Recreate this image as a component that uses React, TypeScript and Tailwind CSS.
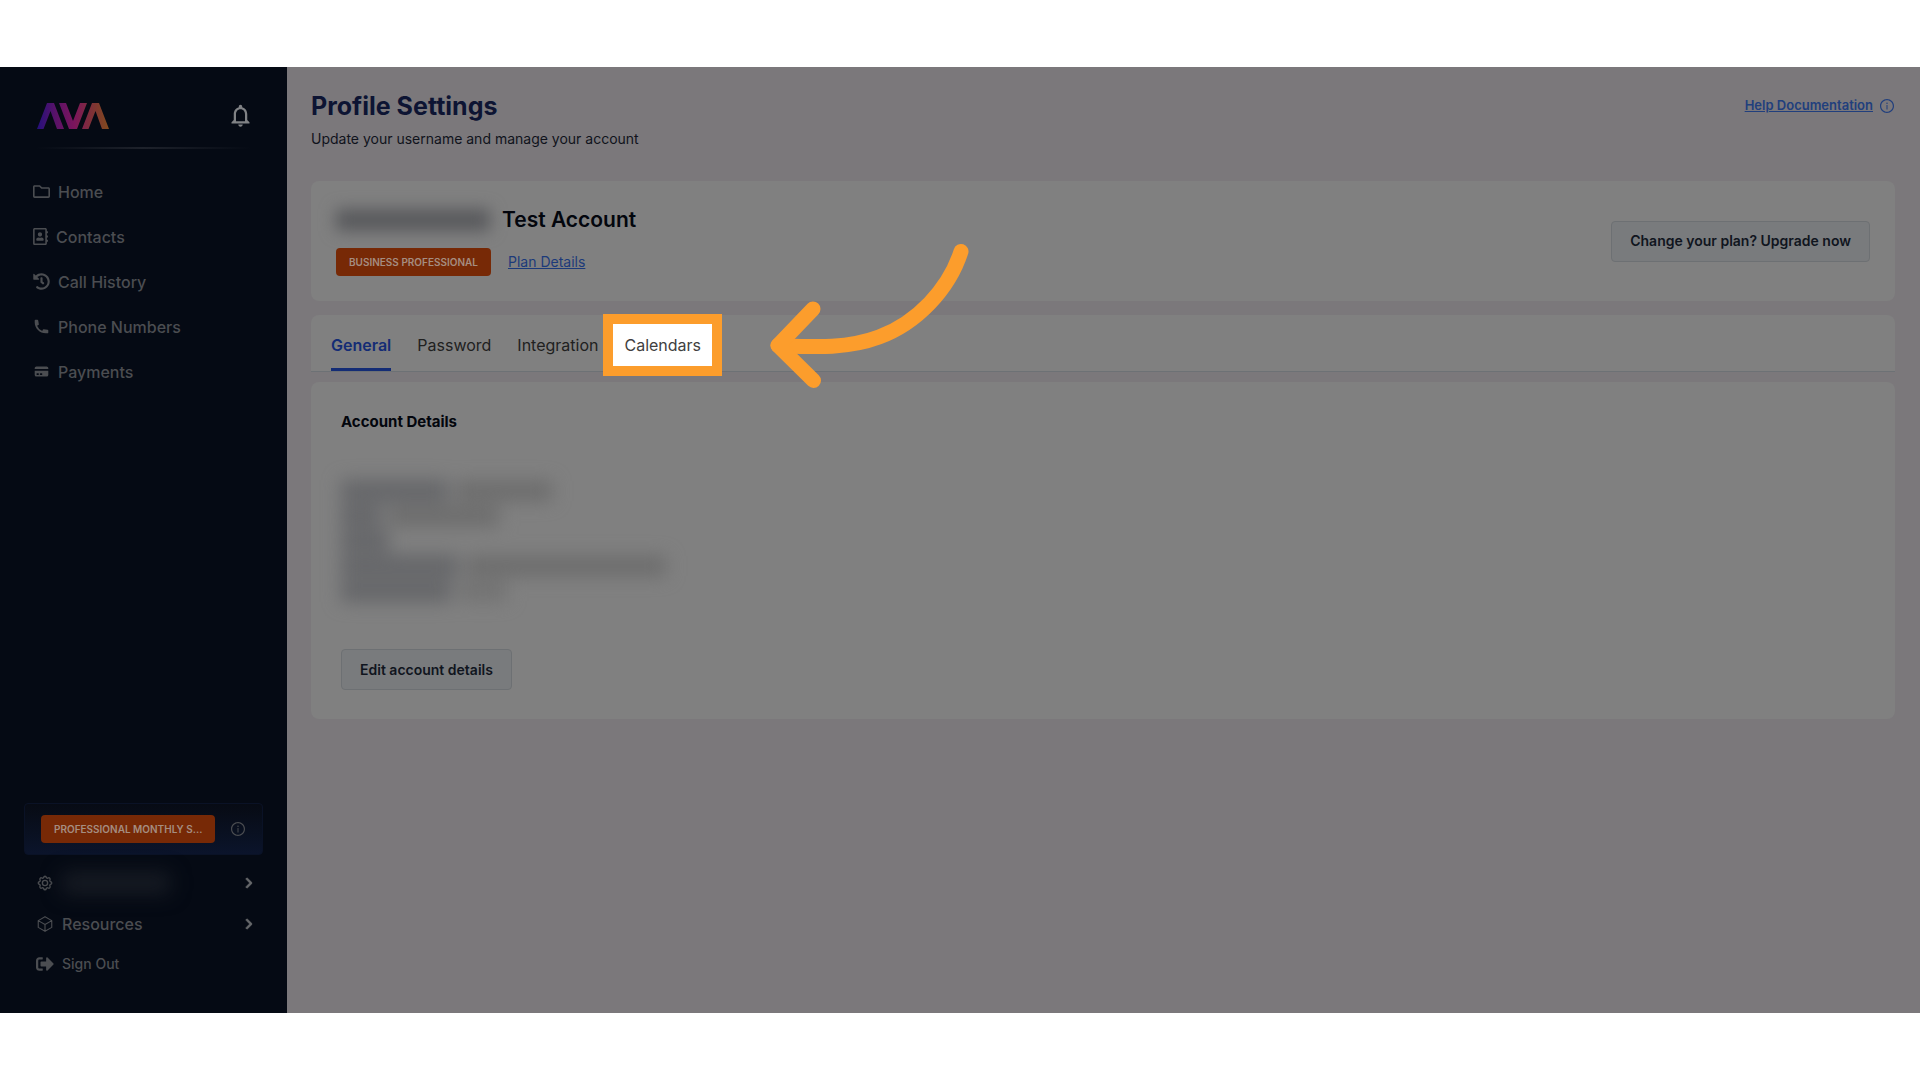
import type { ReactNode } from 'react';
import { AiOutlineInfoCircle } from 'react-icons/ai';
import { FaChevronRight, FaHistory, FaRegAddressBook, FaRegFolder, FaSignOutAlt } from 'react-icons/fa';
import { HiCreditCard, HiPhone } from 'react-icons/hi';
import { HiOutlineCube } from 'react-icons/hi2';
import { MdNotificationsNone } from 'react-icons/md';

const navItems = [
  { label: 'Home', icon: <FaRegFolder className="size-[17px]" /> },
  { label: 'Contacts', icon: <FaRegAddressBook className="h-[17px] w-[15px]" /> },
  { label: 'Call History', icon: <FaHistory className="size-[17px]" /> },
  { label: 'Phone Numbers', icon: <HiPhone className="size-[17px]" /> },
  { label: 'Payments', icon: <HiCreditCard className="size-[17px]" /> },
];

const tabs = ['General', 'Password', 'Integration', 'Calendars'];

const Logo = () => (
  <svg className="h-[26px] w-[72px]" viewBox="0 0 72 26" role="img" aria-label="AVA">
    <defs>
      <linearGradient id="logo" x1="0" y1="0" x2="72" y2="0" gradientUnits="userSpaceOnUse">
        <stop offset="0" stopColor="#24107c" />
        <stop offset="0.25" stopColor="#581268" />
        <stop offset="0.52" stopColor="#7c155c" />
        <stop offset="0.75" stopColor="#7e3038" />
        <stop offset="1" stopColor="#804a1c" />
      </linearGradient>
    </defs>
    <g fill="url(#logo)">
      <path d="M0 26 10 0h7l10 26h-7L13.500 8 6.500 26Z" />
      <path d="M22 0h7l7 18 7-18h7L40 26h-8Z" />
      <path d="M45 26 55 0h7l10 26h-7L58.500 8 51.500 26Z" />
    </g>
  </svg>
);

const CogIcon = () => (
  <svg className="size-[18px]" viewBox="0 0 24 24" fill="none" stroke="currentColor" strokeWidth="1.8" aria-hidden="true">
    <path d="M10.325 4.317c.426-1.756 2.924-1.756 3.350 0a1.724 1.724 0 002.573 1.066c1.543-.94 3.310.826 2.370 2.370a1.724 1.724 0 001.065 2.572c1.756.426 1.756 2.924 0 3.350a1.724 1.724 0 00-1.066 2.573c.94 1.543-.826 3.310-2.370 2.370a1.724 1.724 0 00-2.572 1.065c-.426 1.756-2.924 1.756-3.350 0a1.724 1.724 0 00-2.573-1.066c-1.543.94-3.310-.826-2.370-2.370a1.724 1.724 0 00-1.065-2.572c-1.756-.426-1.756-2.924 0-3.350a1.724 1.724 0 001.066-2.573c-.94-1.543.826-3.310 2.370-2.370.996.608 2.296.07 2.572-1.065z" />
    <circle cx="12" cy="12" r="3.5" />
  </svg>
);

/** Orange plan label */
const PlanBadge = ({ children }: { children: ReactNode }) => (
  <span className="flex h-7 items-center rounded bg-[#772906] px-[13px] text-[10px] font-semibold whitespace-nowrap text-[#a58d80]">
    {children}
  </span>
);

const GrayButton = ({ children }: { children: ReactNode }) => (
  <button
    type="button"
    className="h-[41px] rounded border border-[#6d7073] bg-[#797b7d] px-[18px] text-sm font-semibold text-[#10151e]"
  >
    {children}
  </button>
);

const Chevron = () => (
  <FaChevronRight className="ml-auto size-3 text-[#66686b]" stroke="currentColor" strokeWidth={30} />
);

const Sidebar = () => (
  <aside className="flex w-[287px] shrink-0 flex-col bg-[#050a14] text-[#4b4d51]">
    <div className="mr-[33px] ml-[37px] flex h-20 items-end justify-between pb-[18px]">
      <Logo />
      <button type="button" aria-label="Notifications" className="text-[#808285]">
        <MdNotificationsNone className="size-[27px]" />
      </button>
    </div>
    <div className="mx-9 h-0.5 bg-linear-to-r from-transparent via-[#1e222b] to-transparent" />

    <nav className="mt-5 flex flex-col px-[33px]">
      {navItems.map((item) => (
        <a key={item.label} href="#" className="flex h-[45px] items-center gap-2 text-base font-medium">
          {item.icon}
          {item.label}
        </a>
      ))}
    </nav>

    <div className="mt-auto pb-[30px]">
      <div className="mx-6 flex h-[52px] items-center justify-between rounded border border-[#0a1226] bg-linear-to-b from-[#070b14] to-[#0b142b] px-4">
        <PlanBadge>PROFESSIONAL MONTHLY S...</PlanBadge>
        <AiOutlineInfoCircle className="size-4" />
      </div>
      <a href="#" aria-label="Account" className="mt-2 flex h-10 items-center gap-2 pr-8 pl-9">
        <CogIcon />
        <span className="h-5 w-[108px] rounded bg-[#191d25] blur-[10px]" />
        <Chevron />
      </a>
      <a href="#" className="flex h-[42px] items-center gap-2 pr-8 pl-9 text-base font-medium">
        <HiOutlineCube className="size-[18px]" />
        Resources
        <Chevron />
      </a>
      <a href="#" className="flex h-[38px] items-center gap-2 pl-9 text-sm font-medium">
        <FaSignOutAlt className="size-[18px]" />
        Sign Out
      </a>
    </div>
  </aside>
);

/** Curved arrow pointing at the highlighted tab */
const Arrow = () => (
  <svg
    className="pointer-events-none absolute top-[-72px] left-[145px] h-[146px] w-[202px]"
    viewBox="770 243 202 146"
    fill="none"
    stroke="#fc9d2c"
    strokeWidth="15"
    strokeLinecap="round"
    strokeLinejoin="round"
    aria-hidden="true"
  >
    <path d="M962 251.500C950 289 918 323 880 337C848 349 815 347 779 345.500" />
    <path d="M814 309 779 345.500 814.500 380.500" />
  </svg>
);

const Tabs = () => (
  <div role="tablist" className="mt-3.5 flex h-[57px] gap-[26px] rounded-t-lg border-b border-[#6d7175] bg-[#808080] px-5">
    {tabs.map((tab) => {
      if (tab === 'General') {
        return (
          <button key={tab} type="button" role="tab" aria-selected="true" className="border-b-3 border-[#142c75] pt-1.5 text-base font-semibold text-[#142c75]">
            {tab}
          </button>
        );
      }
      if (tab === 'Calendars') {
        return (
          <button key={tab} type="button" role="tab" aria-selected="false" className="relative border-b-3 border-transparent pt-1.5 text-base text-[#404040]">
            <span className="absolute -inset-x-[21px] -top-px h-[62px] border-[10px] border-[#fc9d2c] bg-white" />
            <span className="relative">{tab}</span>
            <Arrow />
          </button>
        );
      }
      return (
        <button key={tab} type="button" role="tab" aria-selected="false" className="border-b-3 border-transparent pt-1.5 text-base text-[#202020]">
          {tab}
        </button>
      );
    })}
  </div>
);

// Redacted account rows: label and value widths
const Redacted = () => (
  <div className="mt-11 flex flex-col blur-[9px]" aria-hidden="true">
    <div className="flex h-[25px] items-center gap-2">
      <span className="h-[22px] w-[107px] bg-[#656669]" />
      <span className="h-5 w-[96px] bg-[#6c6c6c]" />
    </div>
    <div className="flex h-[25px] items-center gap-2">
      <span className="h-[22px] w-10 bg-[#656669]" />
      <span className="h-5 w-[110px] bg-[#6c6c6c]" />
    </div>
    <div className="flex h-[25px] items-center">
      <span className="h-[22px] w-12 bg-[#656669]" />
    </div>
    <div className="flex h-[25px] items-center gap-2">
      <span className="h-[22px] w-[117px] bg-[#656669]" />
      <span className="h-5 w-[200px] bg-[#6c6c6c]" />
    </div>
    <div className="flex h-[25px] items-center gap-2">
      <span className="h-[22px] w-[110px] bg-[#656669]" />
      <span className="h-5 w-[48px] bg-[#727272]" />
    </div>
  </div>
);

const App = () => (
  <div className="flex min-h-screen bg-white py-[67px] font-['Inter',sans-serif]">
    <Sidebar />
    <main className="min-w-0 grow bg-[#7b787b] pt-6 pr-[25px] pl-6">
      <header className="flex h-[90px] items-start justify-between">
        <div>
          <h1 className="text-[25px] leading-[30px] font-bold text-[#0d1433]">Profile Settings</h1>
          <p className="mt-2 text-sm leading-5 text-[#10131c]">Update your username and manage your account</p>
        </div>
        <div className="flex h-[30px] items-center gap-1.5 text-[#213f7d]">
          <a href="#" className="text-[13px] font-semibold underline">Help Documentation</a>
          <AiOutlineInfoCircle className="size-4" />
        </div>
      </header>

      <section className="flex h-[120px] items-center justify-between rounded-lg bg-[#808080] px-[25px]">
        <div>
          <h2 className="flex h-7 items-center gap-3 text-[21px] font-semibold text-[#03060d]">
            <span className="h-[22px] w-[154px] bg-[#58595c] blur-[8px]" aria-hidden="true" />
            Test Account
          </h2>
          <div className="mt-3.5 flex items-center gap-[17px]">
            <PlanBadge>BUSINESS PROFESSIONAL</PlanBadge>
            <a href="#" className="text-sm text-[#1c3a7a] underline">Plan Details</a>
          </div>
        </div>
        <GrayButton>Change your plan? Upgrade now</GrayButton>
      </section>

      <Tabs />

      <section className="mt-2.5 rounded-lg bg-[#808080] px-[30px] pt-7 pb-[29px]">
        <h3 className="text-[15px] leading-6 font-bold text-[#03060d]">Account Details</h3>
        <Redacted />
        <div className="mt-[46px]">
          <GrayButton>Edit account details</GrayButton>
        </div>
      </section>
    </main>
  </div>
);

export default App;
